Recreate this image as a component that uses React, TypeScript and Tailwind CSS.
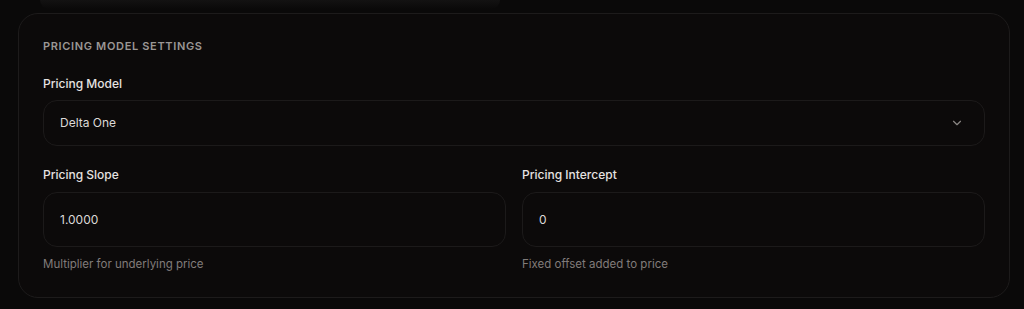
import { ChevronDown } from "lucide-react";

function Field({ label, value, hint }: { label: string; value: string; hint: string }) {
  return (
    <div className="flex flex-col">
      <label className="text-[12px] leading-4 font-medium text-[#e6e3e1]">{label}</label>
      <div className="mt-[9px] flex h-[55px] items-center rounded-[14px] border border-[#1c1a1a] bg-[#0c0a0a] px-4 text-[12px] text-[#dcd9d7]">
        {value}
      </div>
      <p className="mt-[9px] text-[11.5px] leading-4 text-[#817c7a]">{hint}</p>
    </div>
  );
}

export default function App() {
  return (
    <div
      className="relative h-[309px] w-full bg-[#0a0909] pt-[13px] pl-[18px] pr-[14px]"
      style={{ fontFamily: "Inter, 'Noto Sans', sans-serif" }}
    >
      <div className="pointer-events-none absolute left-[40px] top-0 h-[9px] w-[460px] rounded-b-full bg-gradient-to-b from-[#131212] to-transparent" />
      <section className="relative rounded-[20px] border border-[#1d1b1b] bg-[#0c0a0a] px-6 pt-6 pb-[25px]">
        <h2 className="text-[11px] leading-4 font-semibold uppercase tracking-[0.06em] text-[#9b9795]">
          Pricing Model Settings
        </h2>

        <div className="mt-[22px] flex flex-col">
          <label className="text-[12px] leading-4 font-medium text-[#e6e3e1]">Pricing Model</label>
          <button className="mt-[8px] flex h-[46px] items-center justify-between rounded-[14px] border border-[#1c1a1a] bg-[#0c0a0a] pl-4 pr-5 text-left text-[12px] text-[#dcd9d7]">
            <span>Delta One</span>
            <ChevronDown className="h-[14px] w-[14px] text-[#8a8684]" strokeWidth={2} />
          </button>
        </div>

        <div className="mt-[21px] grid grid-cols-2 gap-4">
          <Field label="Pricing Slope" value="1.0000" hint="Multiplier for underlying price" />
          <Field label="Pricing Intercept" value="0" hint="Fixed offset added to price" />
        </div>
      </section>
    </div>
  );
}
